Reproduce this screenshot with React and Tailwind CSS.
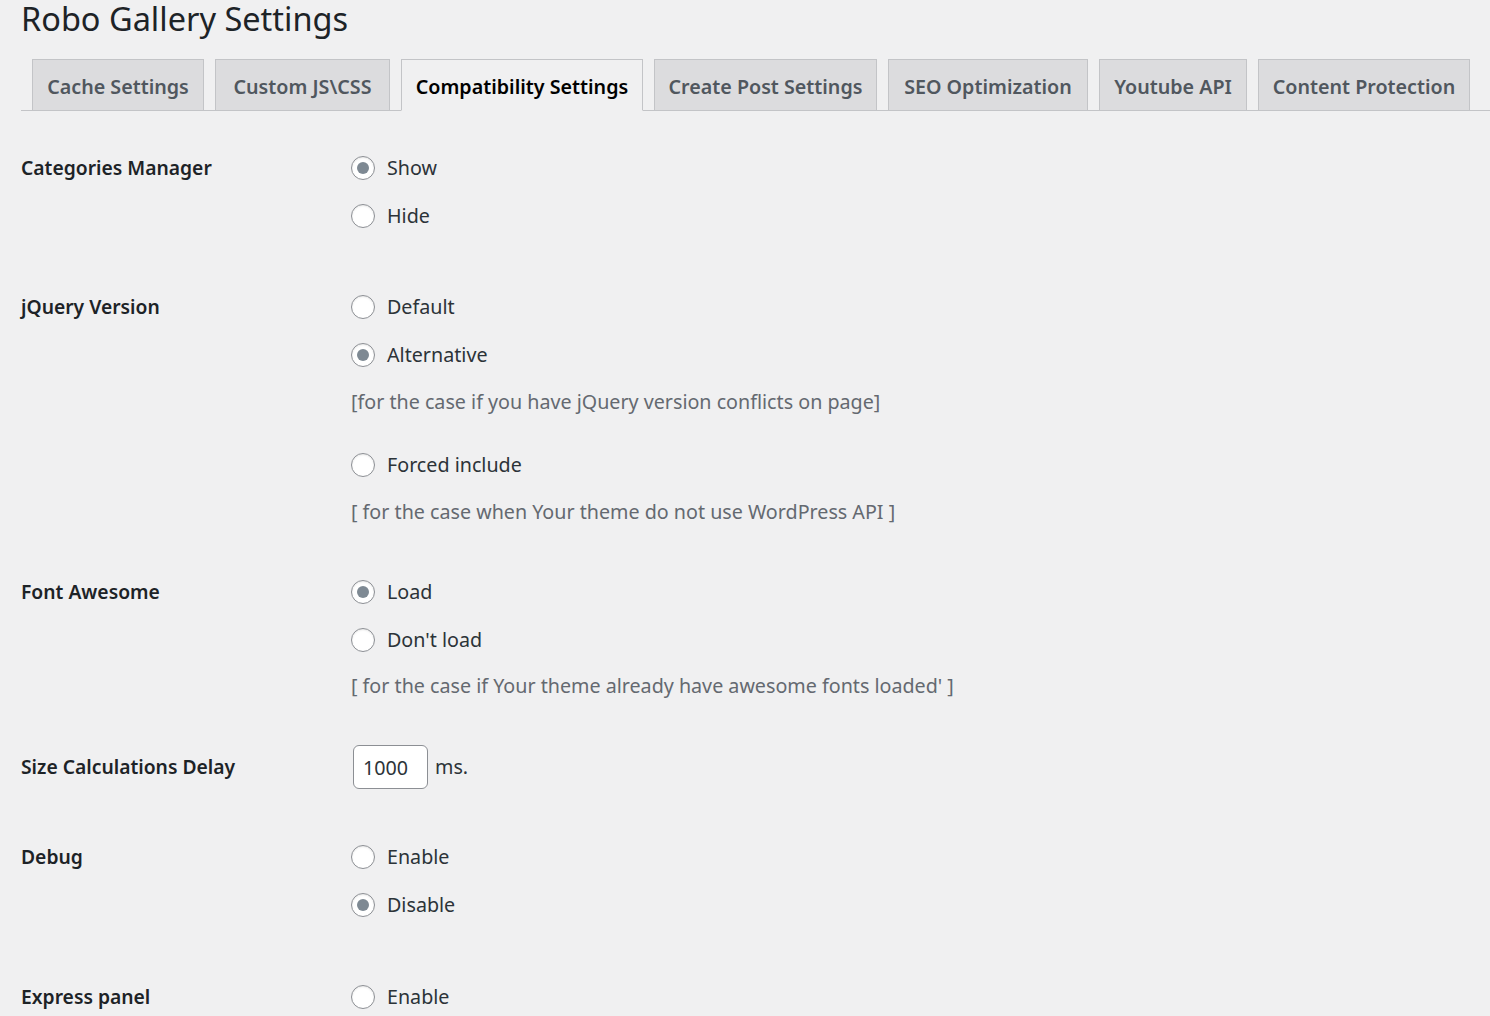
import { useState } from "react";

const tabs = [
  { name: "Cache Settings", w: "w-[172px]" },
  { name: "Custom JS\\CSS", w: "w-[175px]" },
  { name: "Compatibility Settings", w: "w-[242px]", active: true },
  { name: "Create Post Settings", w: "w-[223px]" },
  { name: "SEO Optimization", w: "w-[200px]" },
  { name: "Youtube API", w: "w-[148px]" },
  { name: "Content Protection", w: "w-[212px]" },
];

const Radio = ({ checked, label, onClick }) => (
  <div className="h-[48px] flex items-center cursor-pointer" onClick={onClick}>
    <span className="w-6 h-6 rounded-full border-[1.5px] border-[#8c8f94] bg-white flex items-center justify-center shadow-[inset_0_1px_2px_rgba(0,0,0,0.1)]">
      {checked && <span className="w-3 h-3 rounded-full bg-[#7e8993]" />}
    </span>
    <span className="ml-3 text-[#2c3338]">{label}</span>
  </div>
);

const Desc = ({ children, className }) => (
  <p className={"h-[30px] leading-[30px] text-[#646970] " + (className || "")}>{children}</p>
);

const Label = ({ children }) => (
  <div className="w-[330px] shrink-0 h-[48px] flex items-center font-semibold text-[19.3px] text-[#1d2327]">
    {children}
  </div>
);

const App = () => {
  const [catManager, setCatManager] = useState("show");
  const [jquery, setJquery] = useState("alternative");
  const [fontAwesome, setFontAwesome] = useState("load");
  const [delay, setDelay] = useState("1000");
  const [debug, setDebug] = useState("disable");
  const [express, setExpress] = useState("");

  return (
    <div className="min-h-screen w-full bg-[#f0f0f1] text-[19.7px] font-['Noto_Sans','Open_Sans',sans-serif] overflow-hidden">
      <h1 className="-mt-[3px] pl-[21px] h-[43px] leading-[43px] text-[32.5px] font-normal text-[#1d2327]">
        Robo Gallery Settings
      </h1>

      <div className="mt-[19px] ml-[21px] pl-[11px] flex items-end gap-[11px] border-b border-[#c3c4c7]">
        {tabs.map((t) => (
          <div
            key={t.name}
            className={
              t.w +
              " h-[52px] -mb-px pt-[3px] flex items-center justify-center border border-[#c3c4c7] font-semibold whitespace-nowrap " +
              (t.active
                ? "bg-[#f0f0f1] text-black border-b-[#f0f0f1]"
                : "bg-[#dcdcde] text-[#50575e]")
            }
          >
            {t.name}
          </div>
        ))}
      </div>

      <div className="pl-[21px] pt-[33px]">
        <div className="flex">
          <Label>Categories Manager</Label>
          <div>
            <Radio label="Show" checked={catManager === "show"} onClick={() => setCatManager("show")} />
            <Radio label="Hide" checked={catManager === "hide"} onClick={() => setCatManager("hide")} />
          </div>
        </div>

        <div className="flex mt-[43px]">
          <Label>jQuery Version</Label>
          <div>
            <Radio label="Default" checked={jquery === "default"} onClick={() => setJquery("default")} />
            <Radio label="Alternative" checked={jquery === "alternative"} onClick={() => setJquery("alternative")} />
            <Desc className="mt-[8px]">[for the case if you have jQuery version conflicts on page]</Desc>
            <div className="mt-[24px]">
              <Radio label="Forced include" checked={jquery === "forced"} onClick={() => setJquery("forced")} />
            </div>
            <Desc className="mt-[8px]">[ for the case when Your theme do not use WordPress API ]</Desc>
          </div>
        </div>

        <div className="flex mt-[41px]">
          <Label>Font Awesome</Label>
          <div>
            <Radio label="Load" checked={fontAwesome === "load"} onClick={() => setFontAwesome("load")} />
            <Radio label="Don't load" checked={fontAwesome === "noload"} onClick={() => setFontAwesome("noload")} />
            <Desc className="mt-[7px]">[ for the case if Your theme already have awesome fonts loaded' ]</Desc>
          </div>
        </div>

        <div className="flex items-center mt-[44px]">
          <div className="w-[330px] shrink-0 font-semibold text-[19.3px] text-[#1d2327]">Size Calculations Delay</div>
          <div className="flex items-center">
            <input
              className="ml-[2px] w-[75px] h-[44px] px-[9px] rounded-[6px] border border-[#8c8f94] bg-white text-[#2c3338] outline-none"
              value={delay}
              onChange={(e) => setDelay(e.target.value)}
            />
            <span className="ml-[7px] text-[#2c3338]">ms.</span>
          </div>
        </div>

        <div className="flex mt-[44px]">
          <Label>Debug</Label>
          <div>
            <Radio label="Enable" checked={debug === "enable"} onClick={() => setDebug("enable")} />
            <Radio label="Disable" checked={debug === "disable"} onClick={() => setDebug("disable")} />
          </div>
        </div>

        <div className="flex mt-[44px]">
          <Label>Express panel</Label>
          <div>
            <Radio label="Enable" checked={express === "enable"} onClick={() => setExpress("enable")} />
          </div>
        </div>
      </div>
    </div>
  );
};

export default App;
